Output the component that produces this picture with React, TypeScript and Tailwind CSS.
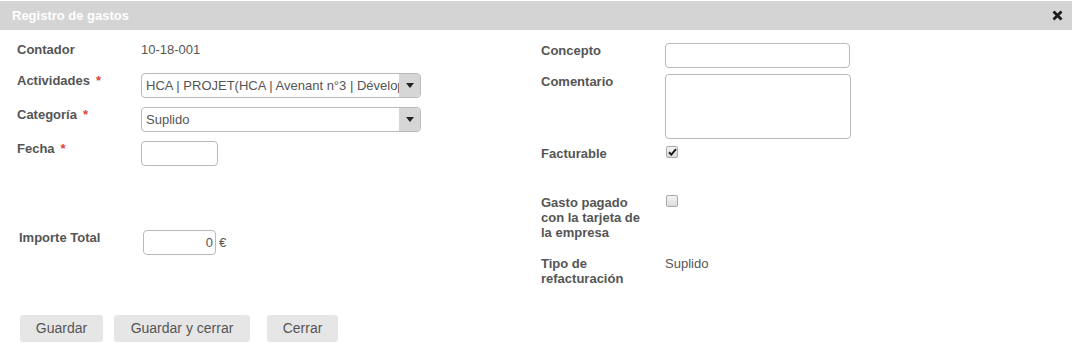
const Req = () => <span className="ml-[6px] text-[#e0433b]">*</span>;

const Caret = () => (
  <svg width="8" height="5" viewBox="0 0 8 5" className="block">
    <path d="M0 0h8L4 5z" fill="#222" />
  </svg>
);

const Select = ({ value }: { value: string }) => (
  <div className="relative flex h-[25px] w-[280px] items-center overflow-hidden rounded-[4px] border border-[#bdb8b2] bg-white">
    <span className="whitespace-nowrap pl-[4px] pr-[22px] text-[13px] text-[#555]">{value}</span>
    <span className="absolute inset-y-0 right-0 flex w-[21px] items-center justify-center bg-[#d6d6d6]">
      <Caret />
    </span>
  </div>
);

const Check = ({ checked }: { checked?: boolean }) => (
  <span className="flex h-[12px] w-[12px] items-center justify-center rounded-[2px] border border-[#a9a9a9] bg-gradient-to-b from-[#f4f4f4] to-[#dcdcdc]">
    {checked && (
      <svg width="9" height="8" viewBox="0 0 9 8">
        <path d="M1 4.3l2.3 2.3L8 1.2" stroke="#1e1e1e" strokeWidth="2" fill="none" />
      </svg>
    )}
  </span>
);

const Label = ({ children, className = '' }: { children: React.ReactNode; className?: string }) => (
  <div className={`w-[124px] shrink-0 text-[13px] font-bold leading-[15px] text-[#555] ${className}`}>{children}</div>
);

const Button = ({ children, w }: { children: React.ReactNode; w: string }) => (
  <button className={`h-[27px] ${w} rounded-[3px] bg-[#e6e6e6] text-[14px] text-[#555]`}>{children}</button>
);

export default function App() {
  return (
    <div className="h-[347px] w-[1072px] bg-white text-[13px] text-[#555]" style={{ fontFamily: '"Liberation Sans", Arial, sans-serif' }}>
      {/* Title bar */}
      <div className="mt-px flex h-[29px] items-center justify-between bg-[#d4d4d4] pl-[12px] pr-[9px]">
        <span className="text-[13px] font-bold text-white">Registro de gastos</span>
        <svg width="11" height="11" viewBox="0 0 11 11">
          <path d="M1.5 1.5l8 8M9.5 1.5l-8 8" stroke="#1b1b1b" strokeWidth="2.8" />
        </svg>
      </div>

      <div className="flex">
        {/* Left column */}
        <div className="w-[524px] pl-[17px]">
          <div className="mt-[12px] flex">
            <Label className="w-[123px]">Contador</Label>
            <span className="leading-[15px]">10-18-001</span>
          </div>
          <div className="mt-[16px] flex">
            <Label className="w-[123px]">Actividades<Req /></Label>
            <Select value="HCA | PROJET(HCA | Avenant n°3 | Développement)" />
          </div>
          <div className="mt-[9px] flex">
            <Label className="w-[123px]">Categoría<Req /></Label>
            <Select value="Suplido" />
          </div>
          <div className="mt-[9px] flex">
            <Label className="w-[123px]">Fecha<Req /></Label>
            <div className="h-[25px] w-[77px] rounded-[4px] border border-[#bdb8b2]" />
          </div>
          <div className="mt-[64px] flex pl-[2px]">
            <Label className="w-[124px]">Importe Total</Label>
            <div className="flex items-center">
              <div className="flex h-[25px] w-[73px] items-center justify-end rounded-[4px] border border-[#bdb8b2] pr-[2px] text-[13px]">0</div>
              <span className="ml-[3px] text-[13px]">€</span>
            </div>
          </div>
        </div>

        {/* Right column */}
        <div className="pl-[17px]">
          <div className="mt-[13px] flex">
            <Label>Concepto</Label>
            <div className="h-[25px] w-[185px] rounded-[4px] border border-[#bdb8b2]" />
          </div>
          <div className="mt-[6px] flex">
            <Label>Comentario</Label>
            <div className="h-[65px] w-[186px] rounded-[4px] border border-[#bdb8b2]" />
          </div>
          <div className="mt-[7px] flex">
            <Label>Facturable</Label>
            <div className="pl-px"><Check checked /></div>
          </div>
          <div className="mt-[34px] flex">
            <Label>Gasto pagado<br />con la tarjeta de<br />la empresa</Label>
            <div className="pl-px"><Check /></div>
          </div>
          <div className="mt-[16px] flex">
            <Label>Tipo de<br />refacturación</Label>
            <span className="leading-[15px]">Suplido</span>
          </div>
        </div>
      </div>

      {/* Actions */}
      <div className="mt-[29px] flex pl-[20px]">
        <Button w="w-[83px]">Guardar</Button>
        <span className="w-[11px]" />
        <Button w="w-[136px]">Guardar y cerrar</Button>
        <span className="w-[17px]" />
        <Button w="w-[71px]">Cerrar</Button>
      </div>
    </div>
  );
}
